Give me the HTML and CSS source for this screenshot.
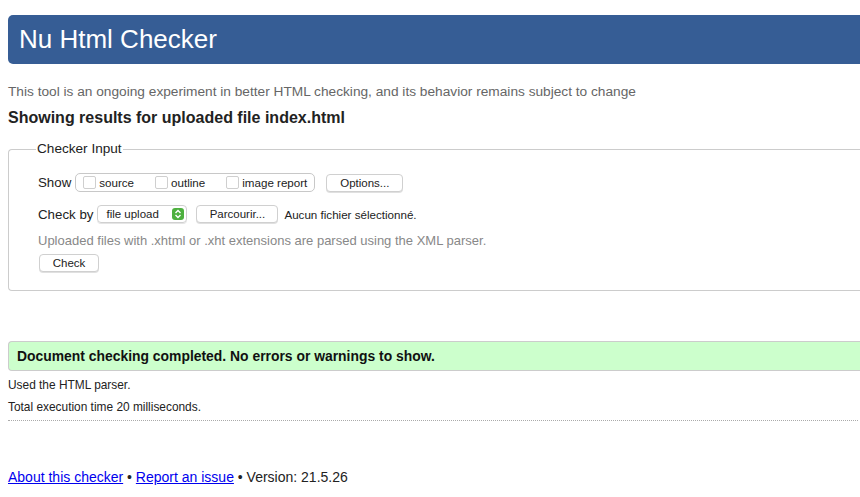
FILE: index.html
```html
<!DOCTYPE html>
<html lang="en">
<head>
<meta charset="utf-8">
<title>Nu Html Checker</title>
<link rel="stylesheet" href="styles.css">
</head>
<body>
<div class="page">
  <h1 class="banner">Nu Html Checker</h1>
  <p class="intro">This tool is an ongoing experiment in better HTML checking, and its behavior remains subject to change</p>
  <h2 class="showing">Showing results for uploaded file index.html</h2>
  <fieldset class="input">
    <legend class="legend">Checker Input</legend>
    <div class="row">
      <span class="label">Show</span>
      <span class="group">
        <span class="opt"><span class="cb"></span>source</span>
        <span class="opt"><span class="cb"></span>outline</span>
        <span class="opt"><span class="cb"></span>image report</span>
      </span>
      <span class="btn btn-options">Options...</span>
    </div>
    <div class="row row2">
      <span class="label">Check by</span>
      <span class="select">file upload
        <span class="stepper"><svg width="8" height="10" viewBox="0 0 8 10"><path d="M1.5 4 L4 1.5 L6.5 4" fill="none" stroke="#fff" stroke-width="1.4"/><path d="M1.5 6 L4 8.5 L6.5 6" fill="none" stroke="#fff" stroke-width="1.4"/></svg></span>
      </span>
      <span class="btn btn-browse">Parcourir...</span>
      <span class="nofile">Aucun fichier sélectionné.</span>
    </div>
    <p class="note">Uploaded files with .xhtml or .xht extensions are parsed using the XML parser.</p>
    <span class="btn btn-check">Check</span>
  </fieldset>
  <p class="success">Document checking completed. No errors or warnings to show.</p>
  <p class="detail">Used the HTML parser.</p>
  <p class="detail detail2">Total execution time 20 milliseconds.</p>
  <hr class="dots">
  <p class="footer"><a href="#">About this checker</a> • <a href="#">Report an issue</a> • Version: 21.5.26</p>
</div>
</body>
</html>
```
FILE: styles.css
```css
html { overflow: hidden; }
body {
  margin: 0;
  padding: 8px 0 0 8px;
  font-family: "Liberation Sans", Arial, Helvetica, sans-serif;
  color: #222;
  background: #fff;
}
.page { width: 866px; }
.banner {
  margin: 7px 0 0 0;
  height: 49px;
  line-height: 49px;
  padding-left: 11px;
  background: #365d95;
  color: #fff;
  font-size: 26px;
  font-weight: normal;
  border-radius: 5px 0 0 5px;
}
.intro {
  margin: 20px 0 0 0;
  font-size: 13.7px;
  line-height: 16px;
  color: #666;
}
.showing {
  margin: 8px 0 0 0;
  font-size: 16px;
  line-height: 20px;
  font-weight: bold;
  color: #222;
}
.input {
  margin: 13px 0 0 0;
  padding: 1px 0 18px 29px;
  border: 1px solid #ccc;
  border-right: none;
  border-radius: 4px 0 0 4px;
  min-width: 0;
}
.legend {
  font-size: 13.6px;
  line-height: 16px;
  padding: 0 1px;
  margin-left: -2px;
}
.row {
  display: flex;
  align-items: center;
  margin-top: 15px;
  height: 19px;
  font-size: 13.3px;
}
.row2 { margin-top: 13px; height: 18px; }
.label { margin-right: 4px; }
.group {
  display: flex;
  align-items: center;
  height: 17px;
  border: 1px solid #c8c8c8;
  border-radius: 5px;
  padding: 0 7px 0 7px;
  font-size: 11.6px;
  gap: 21px;
}
.opt { display: flex; align-items: center; }
.cb {
  width: 11px;
  height: 11px;
  border: 1px solid #cfcfcf;
  border-radius: 2px;
  margin-right: 3px;
  background: #fff;
}
.btn {
  display: inline-flex;
  align-items: center;
  justify-content: center;
  height: 16px;
  border: 1px solid #d0d0d0;
  border-radius: 4px;
  background: #fff;
  box-shadow: 0 1px 0 rgba(0,0,0,0.12);
  font-size: 11.5px;
  color: #222;
}
.btn-options { width: 75px; margin-left: 11px; }
.select {
  display: inline-flex;
  align-items: center;
  width: 78px;
  height: 16px;
  border: 1px solid #d0d0d0;
  border-radius: 4px;
  box-shadow: 0 1px 0 rgba(0,0,0,0.1);
  padding: 0 2px 0 8px;
  font-size: 11.5px;
  justify-content: space-between;
}
.stepper {
  width: 12px;
  height: 12px;
  border-radius: 3px;
  background: #4db03f;
  display: flex;
  align-items: center;
  justify-content: center;
}
.btn-browse { width: 80px; margin-left: 9px; }
.nofile { font-size: 11.6px; margin-left: 6px; color: #222; }
.note {
  margin: 10px 0 0 0;
  font-size: 13px;
  line-height: 16px;
  color: #888;
}
.btn-check { width: 58px; margin: 5px 0 0 1px; }
.success {
  margin: 50px 0 0 0;
  height: 28px;
  line-height: 28px;
  padding-left: 8px;
  background: #ccffcc;
  border: 1px solid #ccc;
  border-right: none;
  border-radius: 4px 0 0 4px;
  font-size: 13.9px;
  font-weight: bold;
  color: #111;
}
.detail {
  margin: 7px 0 0 0;
  font-size: 11.9px;
  line-height: 14px;
  color: #222;
}
.detail2 { margin-top: 8px; }
.dots {
  margin: 6px 0 0 0;
  width: 850px;
  border: none;
  border-top: 1px dotted #aaa;
  height: 0;
}
.footer {
  margin: 48px 0 0 0;
  font-size: 14px;
  line-height: 16px;
  color: #222;
}
.footer a { color: #0000ee; }
```
